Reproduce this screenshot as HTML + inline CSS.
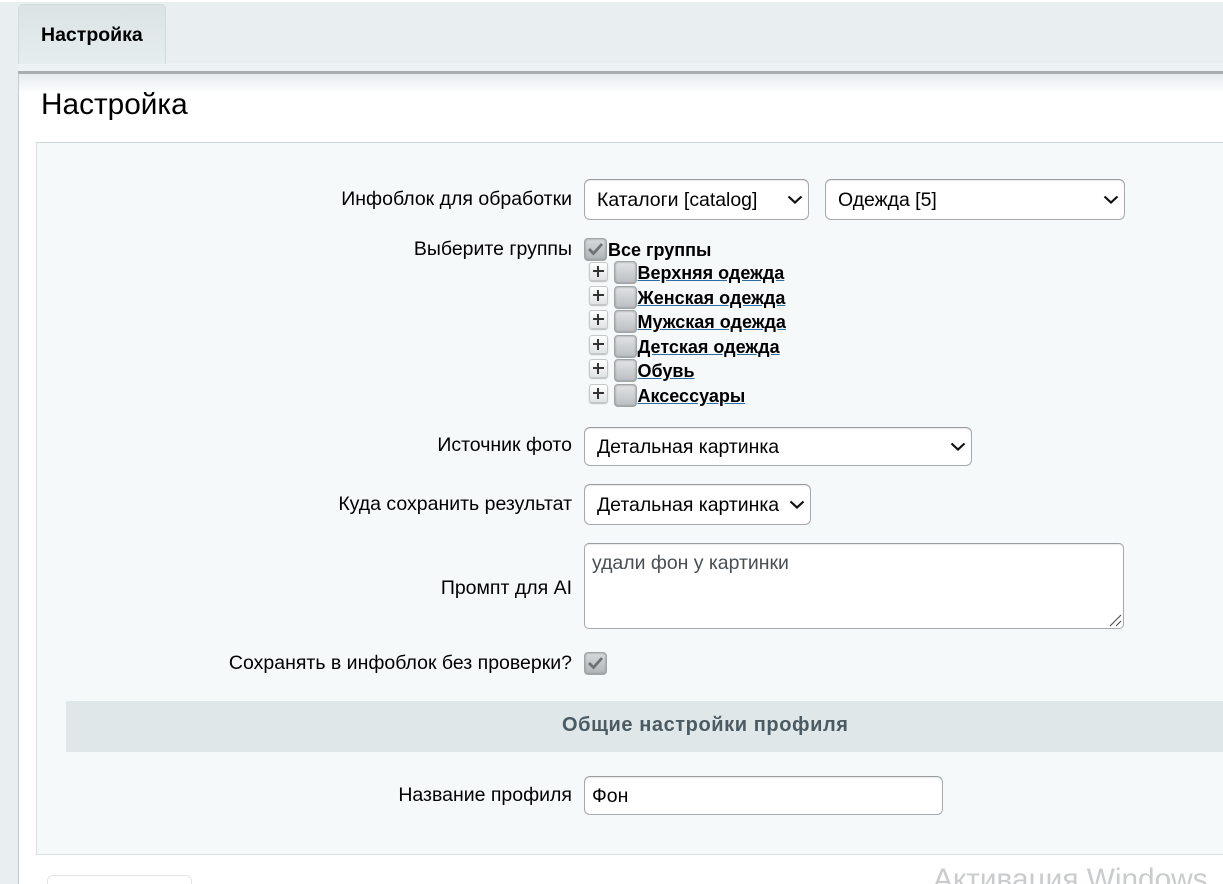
<!DOCTYPE html>
<html lang="ru"><head><meta charset="utf-8"><title>Настройка</title>
<style>
html,body{margin:0;padding:0;width:1223px;height:884px;overflow:hidden;background:#e9eff1}
body{position:relative;font-family:"Liberation Sans",sans-serif;color:#000}
.a{position:absolute;white-space:nowrap}
.l{position:absolute;right:651px;font-size:19.5px;line-height:22px;white-space:nowrap;text-align:right}
.s{position:absolute;box-sizing:border-box;background:#fff;border:1px solid #a5aaac;border-top-color:#999d9f;border-radius:6px;font-size:19.45px;padding-left:12px;white-space:nowrap;box-shadow:inset 0 1px 1px #e8e8e8}
.s svg{position:absolute;right:5px;top:50%;margin-top:-5px}
.cb{position:absolute;box-sizing:border-box;width:23px;height:23px;border-radius:4px;border:1px solid #a0a5a6;background:linear-gradient(#e2e4e5,#b9bec1);box-shadow:inset 0 0 2px #888}
.cb.on{background:linear-gradient(#d8dbdc,#aeb3b6)}
.cb svg{position:absolute;left:2px;top:3px}
.p{position:absolute;box-sizing:border-box;left:589px;width:19px;height:19px;border:1px solid #c3c8c9;border-radius:3px;background:linear-gradient(#fff,#dfe3e4);box-shadow:0 1px 1px #bbb}
.p:before{content:"";position:absolute;left:3px;top:7px;width:11px;height:2px;background:#333}
.p:after{content:"";position:absolute;left:7px;top:3px;width:2px;height:11px;background:#333}
.t{position:absolute;left:637.5px;font-size:18px;line-height:22px;font-weight:bold;text-decoration:underline;text-decoration-color:#2e6da4;white-space:nowrap}
</style></head><body>

<!-- page chrome -->
<div class="a" style="left:0;top:0;width:1223px;height:2px;background:#fff"></div>
<div class="a" style="left:18px;top:63px;width:1205px;height:9px;background:#edf3f5"></div>
<div class="a" style="left:18px;top:71px;width:1205px;height:3px;background:#a9afb1"></div>
<div class="a" style="left:18px;top:74px;width:1205px;height:810px;background:#fff;border-left:1px solid #c5cccd;box-sizing:border-box"></div>
<div class="a" style="left:19px;top:74px;width:1204px;height:20px;background:linear-gradient(#e6ecee,#fff)"></div>

<!-- tab -->
<div class="a" style="left:18px;top:4px;width:148px;height:60px;box-sizing:border-box;border:1px solid #d3dadc;border-bottom:0;border-radius:5px 5px 0 0;background:linear-gradient(#dbe3e5,#e6edef)"></div>
<div class="a" style="left:41px;top:24px;font-size:19.5px;line-height:22px;font-weight:bold">Настройка</div>

<!-- title -->
<div class="a" style="left:41px;top:87px;font-size:29.8px;line-height:36px">Настройка</div>

<!-- panel -->
<div class="a" style="left:36px;top:142px;width:1187px;height:713px;box-sizing:border-box;background:#f6f9fa;border:1px solid #d8dfe0;border-right:0;border-top-color:#cdd5d6"></div>

<!-- rows -->
<div class="l" style="top:188px">Инфоблок для обработки</div>
<div class="s" style="left:584px;top:179px;width:225px;height:41px;line-height:40px">Каталоги [catalog]<svg width="16" height="9" viewBox="0 0 16 9"><path d="M1.500 1.500l6.500 6 6.500-6" fill="none" stroke="#111" stroke-width="2.200"/></svg></div>
<div class="s" style="left:825px;top:179px;width:300px;height:41px;line-height:40px">Одежда [5]<svg width="16" height="9" viewBox="0 0 16 9"><path d="M1.500 1.500l6.500 6 6.500-6" fill="none" stroke="#111" stroke-width="2.200"/></svg></div>

<div class="l" style="top:238px">Выберите группы</div>
<div class="cb on" style="left:584px;top:238px"><svg width="17" height="15" viewBox="0 0 17 15"><path d="M2 7l4.500 4.500L15 2" fill="none" stroke="#6d7275" stroke-width="2.800"/></svg></div>
<div class="a" style="left:608px;top:239px;font-size:18px;line-height:22px;font-weight:bold">Все группы</div>

<div class="p" style="top:262px"></div><div class="cb" style="left:614px;top:261px"></div><div class="t" style="top:262px">Верхняя одежда</div>
<div class="p" style="top:286px"></div><div class="cb" style="left:614px;top:286px"></div><div class="t" style="top:287px">Женская одежда</div>
<div class="p" style="top:310px"></div><div class="cb" style="left:614px;top:310px"></div><div class="t" style="top:311px">Мужская одежда</div>
<div class="p" style="top:335px"></div><div class="cb" style="left:614px;top:335px"></div><div class="t" style="top:336px">Детская одежда</div>
<div class="p" style="top:359px"></div><div class="cb" style="left:614px;top:359px"></div><div class="t" style="top:360px">Обувь</div>
<div class="p" style="top:384px"></div><div class="cb" style="left:614px;top:384px"></div><div class="t" style="top:385px">Аксессуары</div>

<div class="l" style="top:434px">Источник фото</div>
<div class="s" style="left:584px;top:427px;width:388px;height:39px;line-height:38px">Детальная картинка<svg width="16" height="9" viewBox="0 0 16 9"><path d="M1.500 1.500l6.500 6 6.500-6" fill="none" stroke="#111" stroke-width="2.200"/></svg></div>

<div class="l" style="top:493px">Куда сохранить результат</div>
<div class="s" style="left:584px;top:484px;width:227px;height:41px;line-height:40px">Детальная картинка<svg width="16" height="9" viewBox="0 0 16 9"><path d="M1.500 1.500l6.500 6 6.500-6" fill="none" stroke="#111" stroke-width="2.200"/></svg></div>

<div class="l" style="top:577px">Промпт для AI</div>
<div class="s" style="left:584px;top:543px;width:540px;height:86px;padding-left:7px;line-height:38px;color:#494f53;border-radius:5px">удали фон у картинки
<svg style="right:1px;top:auto;bottom:1px;margin:0" width="13" height="13" viewBox="0 0 13 13"><path d="M1 12L12 1M7 12l5-5" fill="none" stroke="#555" stroke-width="1.200"/></svg></div>

<div class="l" style="top:652px">Сохранять в инфоблок без проверки?</div>
<div class="cb on" style="left:584px;top:652px"><svg width="17" height="15" viewBox="0 0 17 15"><path d="M2 7l4.500 4.500L15 2" fill="none" stroke="#6d7275" stroke-width="2.800"/></svg></div>

<div class="a" style="left:66px;top:701px;width:1157px;height:51px;background:#e0e7e8"></div>
<div class="a" style="left:562px;top:714px;font-size:20px;letter-spacing:.58px;line-height:23px;font-weight:bold;color:#4b5b63">Общие настройки профиля</div>

<div class="l" style="top:784px">Название профиля</div>
<div class="s" style="left:584px;top:776px;width:359px;height:39px;padding-left:7px;line-height:38px">Фон</div>

<!-- bottom -->
<div class="a" style="left:47px;top:875px;width:145px;height:20px;box-sizing:border-box;border:1px solid #e3e6e7;border-radius:6px;background:#fff"></div>
<div class="a" style="left:933px;top:864px;font-size:29.800px;line-height:32px;color:#c9cbcc">Активация Windows</div>
</body></html>
